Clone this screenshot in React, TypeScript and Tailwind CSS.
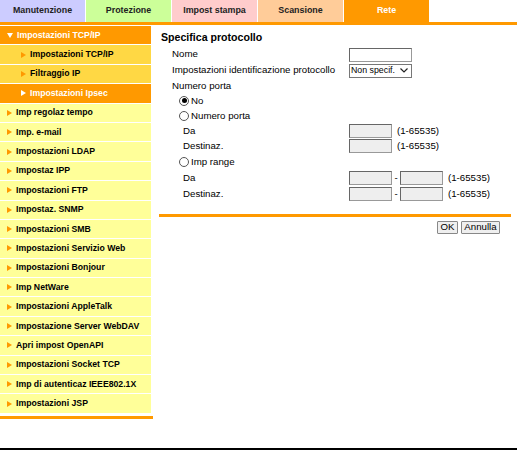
const tabs = [
  { label: 'Manutenzione', cls: 'bg-[#ccccff] text-[#222]' },
  { label: 'Protezione', cls: 'bg-[#ccff99] text-[#222]' },
  { label: 'Impost stampa', cls: 'bg-[#ffcccc] text-[#222]' },
  { label: 'Scansione', cls: 'bg-[#ffcc99] text-[#222]' },
  { label: 'Rete', cls: 'bg-[#ff9900] text-white' },
];

const menu = [
  'Imp regolaz tempo',
  'Imp. e-mail',
  'Impostazioni LDAP',
  'Impostaz IPP',
  'Impostazioni FTP',
  'Impostaz. SNMP',
  'Impostazioni SMB',
  'Impostazioni Servizio Web',
  'Impostazioni Bonjour',
  'Imp NetWare',
  'Impostazioni AppleTalk',
  'Impostazione Server WebDAV',
  'Apri impost OpenAPI',
  'Impostazioni Socket TCP',
  'Imp di autenticaz IEEE802.1X',
  'Impostazioni JSP',
];

function Arrow({ white }: { white?: boolean }) {
  return (
    <svg width="5" height="6" viewBox="0 0 5 6" className="shrink-0">
      <polygon points="0,0 5,3 0,6" fill={white ? '#ffffff' : '#ff9900'} />
    </svg>
  );
}

function Radio({ checked, label }: { checked?: boolean; label: string }) {
  return (
    <div className="flex items-center pl-[7px] gap-[2px]">
      <span className="w-[10px] h-[10px] rounded-full border border-[#555] bg-white flex items-center justify-center">
        {checked && <span className="w-[5px] h-[5px] rounded-full bg-black" />}
      </span>
      <span>{label}</span>
    </div>
  );
}

function Box({ w, disabled }: { w: string; disabled?: boolean }) {
  return (
    <div
      className={`${w} h-[14px] border border-[#999] border-t-[#666] border-l-[#666] ${disabled ? 'bg-[#eeeeee]' : 'bg-white'}`}
    />
  );
}

function Row({ h, label, children, indent }: { h: string; label: React.ReactNode; children?: React.ReactNode; indent?: string }) {
  return (
    <div className={`flex items-center ${h}`}>
      <div className={`w-[177px] ${indent ?? ''}`}>{label}</div>
      <div className="flex items-center">{children}</div>
    </div>
  );
}

export default function App() {
  return (
    <div className="w-[517px] h-[450px] bg-white flex flex-col overflow-hidden font-['Liberation_Sans',Arial,sans-serif]">
      <div className="flex gap-px h-[22px]">
        {tabs.map((t) => (
          <div key={t.label} className={`w-[85px] flex items-center justify-center text-[8.9px] font-bold ${t.cls}`}>
            {t.label}
          </div>
        ))}
      </div>
      <div className="h-[3px] bg-[#ff9900]" />

      <div className="flex flex-1">
        <div className="w-[153px] pt-px">
          <div className="w-[151px] h-[18.4px] mb-px bg-[#ff9900] flex items-center pl-[7px] gap-[4px] text-white text-[8.7px] font-bold">
            <svg width="6" height="5" viewBox="0 0 6 5" className="shrink-0">
              <polygon points="0,0 6,0 3,5" fill="#ffffff" />
            </svg>
            Impostazioni TCP/IP
          </div>
          <div className="w-[151px] h-[18.4px] mb-px bg-[#ffd844] flex items-center pl-[21px] gap-[4px] text-black text-[8.7px] font-bold">
            <Arrow />
            Impostazioni TCP/IP
          </div>
          <div className="w-[151px] h-[18.4px] mb-px bg-[#ffd844] flex items-center pl-[21px] gap-[4px] text-black text-[8.7px] font-bold">
            <Arrow />
            Filtraggio IP
          </div>
          <div className="w-[151px] h-[18.4px] mb-px bg-[#ff9900] flex items-center pl-[21px] gap-[4px] text-white text-[8.7px] font-bold">
            <Arrow white />
            Impostazioni Ipsec
          </div>
          {menu.map((m) => (
            <div key={m} className="w-[151px] h-[18.4px] mb-px bg-[#ffff99] flex items-center pl-[7px] gap-[4px] text-black text-[8.7px] font-bold">
              <Arrow />
              {m}
            </div>
          ))}
          <div className="mt-[3px] h-[3px] bg-[#ff9900]" />
        </div>

        <div className="ml-[6px] w-[352px] pt-[4.5px] text-[9.7px] text-black">
          <div className="h-[17px] pl-[2px] flex items-center text-[10.6px] font-bold">Specifica protocollo</div>
          <div className="pl-[13px]">
            <Row h="h-[16px]" label="Nome">
              <Box w="w-[63px]" />
            </Row>
            <Row h="h-[16px]" label="Impostazioni identificazione protocollo">
              <div className="w-[63px] h-[14px] border border-[#777] bg-white flex items-center justify-between pl-[1px] pr-[3px] text-[8.8px]">
                <span>Non specif.</span>
                <svg width="8" height="5" viewBox="0 0 8 5" className="shrink-0">
                  <polyline points="0.5,0.5 4,4 7.5,0.5" fill="none" stroke="#222" strokeWidth="1.2" />
                </svg>
              </div>
            </Row>
            <Row h="h-[15px]" label="Numero porta" />
            <Row h="h-[15px]" label={<Radio checked label="No" />} />
            <Row h="h-[15px]" label={<Radio label="Numero porta" />} />
            <Row h="h-[15px]" label="Da" indent="pl-[11px]">
              <Box w="w-[43px]" disabled />
              <span className="ml-[5px]">(1-65535)</span>
            </Row>
            <Row h="h-[16px]" label="Destinaz." indent="pl-[11px]">
              <Box w="w-[43px]" disabled />
              <span className="ml-[5px]">(1-65535)</span>
            </Row>
            <Row h="h-[16px]" label={<Radio label="Imp range" />} />
            <Row h="h-[16px]" label="Da" indent="pl-[11px]">
              <Box w="w-[43px]" disabled />
              <span className="w-[8px] text-center">-</span>
              <Box w="w-[43px]" disabled />
              <span className="ml-[5px]">(1-65535)</span>
            </Row>
            <Row h="h-[16px]" label="Destinaz." indent="pl-[11px]">
              <Box w="w-[43px]" disabled />
              <span className="w-[8px] text-center">-</span>
              <Box w="w-[43px]" disabled />
              <span className="ml-[5px]">(1-65535)</span>
            </Row>
          </div>
          <div className="mt-[11px] h-[3px] bg-[#ff9900]" />
          <div className="flex justify-end gap-[3px] pr-[11px] mt-[4px]">
            <button className="h-[13px] w-[21px] border border-[#888] bg-[#efefef] rounded-[1px] text-[9.7px] leading-none">OK</button>
            <button className="h-[13px] w-[39px] border border-[#888] bg-[#efefef] rounded-[1px] text-[9.7px] leading-none">Annulla</button>
          </div>
        </div>
      </div>
      <div className="h-[2px] bg-black" />
    </div>
  );
}
